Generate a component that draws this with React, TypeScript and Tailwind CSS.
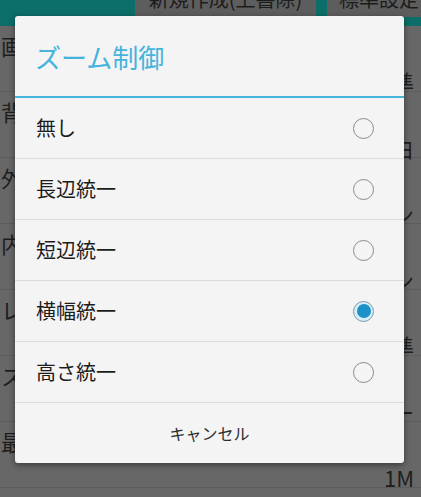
import React from 'react';

const bgRows = [
  { label: '画像サイズ', value: '標準' },
  { label: '背景色', value: '白' },
  { label: '外部ストレージ', value: 'オン' },
  { label: '内部キャッシュ', value: 'オン' },
  { label: 'レイアウト', value: '標準' },
  { label: 'スクロール', value: 'ー' },
  { label: '最大表示数', value: '1M' },
];

const options = ['無し', '長辺統一', '短辺統一', '横幅統一', '高さ統一'];

const Radio: React.FC<{ checked?: boolean }> = ({ checked }) =>
  checked ? (
    <span className="w-[21px] h-[21px] rounded-full border border-[#7a9aa8] bg-[#d6eef8] flex items-center justify-center">
      <span className="w-[14px] h-[14px] rounded-full bg-[#1b90c9]" />
    </span>
  ) : (
    <span className="w-[21px] h-[21px] rounded-full border border-[#8a8a8a]" />
  );

export default function App() {
  return (
    <div
      className="relative w-[421px] h-[497px] overflow-hidden bg-[#676767]"
      style={{ fontFamily: '"Noto Sans CJK JP", "Noto Sans", sans-serif' }}
    >
      {/* dimmed app behind the dialog */}
      <div className="h-[26px] bg-[#0b6e68] flex items-start">
        <div className="flex gap-[11px] ml-[135px] -mt-[20px]">
          <div className="w-[181px] h-[37px] bg-[#5d5d5d] flex items-center justify-center text-[20px] text-[#1c1c1c] whitespace-nowrap">
            新規作成(上書除)
          </div>
          <div className="w-[120px] h-[37px] bg-[#5d5d5d] flex items-center pl-[12px] text-[20px] text-[#1c1c1c] whitespace-nowrap">
            標準設定
          </div>
        </div>
      </div>
      <div className="flex flex-col">
        {bgRows.map((r) => (
          <div key={r.label} className="h-[66px] border-b border-[#5c5c5c] flex flex-col pl-[1px] pr-[7px]">
            <div className="text-[22px] leading-[26px] mt-[6px] text-[#1e1e1e] whitespace-nowrap">{r.label}</div>
            <div className="text-[22px] leading-[24px] mt-[11px] text-right text-[#1e1e1e]">{r.value}</div>
          </div>
        ))}
      </div>

      {/* dialog */}
      <div className="absolute left-[15px] top-[16px] w-[389px] bg-[#f4f4f4] rounded-[3px] shadow-[0_2px_6px_rgba(0,0,0,0.45)] flex flex-col">
        <div className="h-[80px] flex items-center pl-[20px] text-[26px] text-[#45b3dc]">ズーム制御</div>
        <div className="h-[2px] bg-[#45b3dc]" />
        {options.map((o, i) => (
          <div key={o} className="h-[61px] border-b border-[#dcdcdc] flex items-center justify-between pl-[21px] pr-[30px]">
            <span className="text-[20px] text-[#1c1c1c]">{o}</span>
            <Radio checked={i === 3} />
          </div>
        ))}
        <div className="h-[60px] flex items-center justify-center text-[16px] text-[#2c2c2c]">キャンセル</div>
      </div>
    </div>
  );
}
